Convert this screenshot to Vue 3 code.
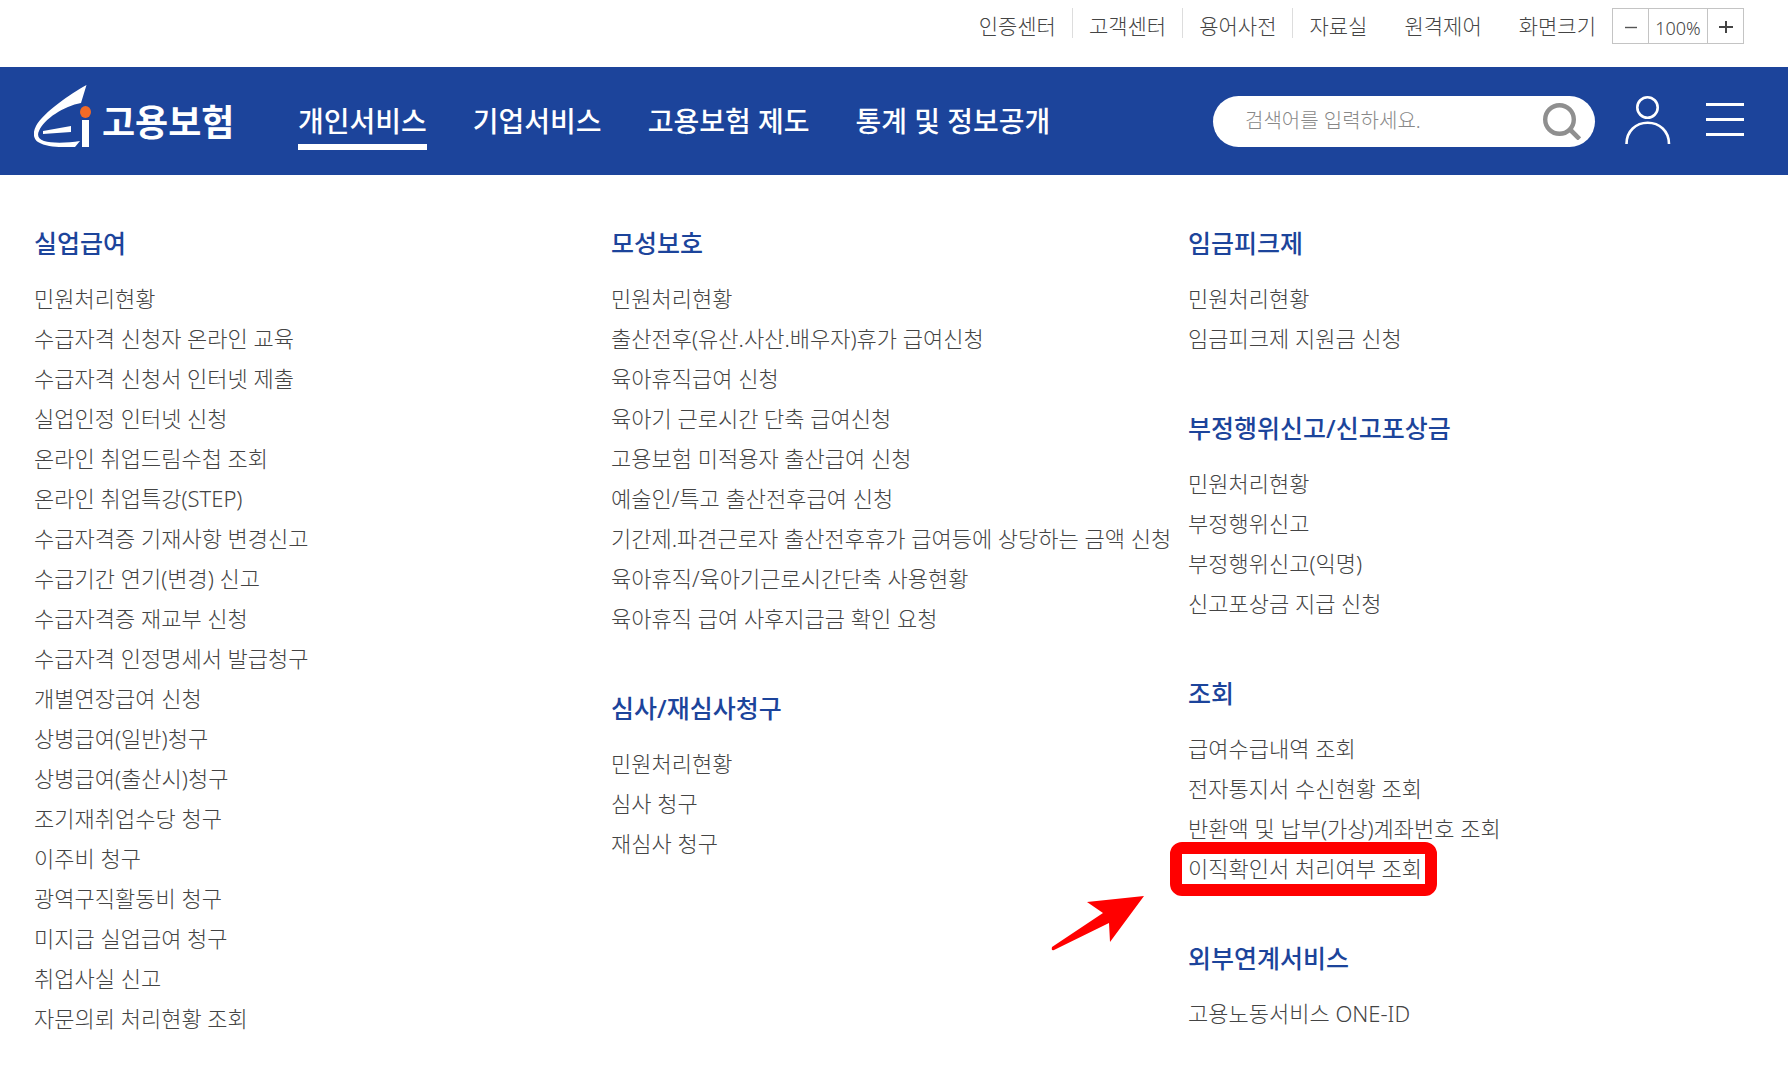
<script setup>
import { ref } from 'vue'

const zoom = ref(100)
const keyword = ref('')

const utilities = [
  { label: '인증센터', divided: true },
  { label: '고객센터', divided: true },
  { label: '용어사전', divided: true },
  { label: '자료실', divided: false },
  { label: '원격제어', divided: false },
]

const menus = ['개인서비스', '기업서비스', '고용보험 제도', '통계 및 정보공개']

const columns = [
  [
    {
      title: '실업급여',
      items: [
        '민원처리현황',
        '수급자격 신청자 온라인 교육',
        '수급자격 신청서 인터넷 제출',
        '실업인정 인터넷 신청',
        '온라인 취업드림수첩 조회',
        '온라인 취업특강(STEP)',
        '수급자격증 기재사항 변경신고',
        '수급기간 연기(변경) 신고',
        '수급자격증 재교부 신청',
        '수급자격 인정명세서 발급청구',
        '개별연장급여 신청',
        '상병급여(일반)청구',
        '상병급여(출산시)청구',
        '조기재취업수당 청구',
        '이주비 청구',
        '광역구직활동비 청구',
        '미지급 실업급여 청구',
        '취업사실 신고',
        '자문의뢰 처리현황 조회',
      ],
    },
  ],
  [
    {
      title: '모성보호',
      items: [
        '민원처리현황',
        '출산전후(유산.사산.배우자)휴가 급여신청',
        '육아휴직급여 신청',
        '육아기 근로시간 단축 급여신청',
        '고용보험 미적용자 출산급여 신청',
        '예술인/특고 출산전후급여 신청',
        '기간제.파견근로자 출산전후휴가 급여등에 상당하는 금액 신청',
        '육아휴직/육아기근로시간단축 사용현황',
        '육아휴직 급여 사후지급금 확인 요청',
      ],
    },
    { title: '심사/재심사청구', items: ['민원처리현황', '심사 청구', '재심사 청구'] },
  ],
  [
    { title: '임금피크제', items: ['민원처리현황', '임금피크제 지원금 신청'] },
    {
      title: '부정행위신고/신고포상금',
      items: ['민원처리현황', '부정행위신고', '부정행위신고(익명)', '신고포상금 지급 신청'],
    },
    {
      title: '조회',
      items: [
        '급여수급내역 조회',
        '전자통지서 수신현황 조회',
        '반환액 및 납부(가상)계좌번호 조회',
        '이직확인서 처리여부 조회',
      ],
    },
    { title: '외부연계서비스', items: ['고용노동서비스 ONE-ID'] },
  ],
]

const highlighted = '이직확인서 처리여부 조회'
</script>

<template>
  <div class="page">
    <div class="utility">
      <ul class="utility-links">
        <li v-for="u in utilities" :key="u.label" :class="{ divided: u.divided }">
          <a href="#">{{ u.label }}</a>
        </li>
      </ul>
      <span class="zoom-label">화면크기</span>
      <div class="zoom" role="group" aria-label="화면크기">
        <button type="button" aria-label="축소" @click="zoom -= 10">
          <svg width="14" height="14" viewBox="0 0 14 14"><path d="M1 8.5h12" stroke="#555" stroke-width="1.4" /></svg>
        </button>
        <output>{{ zoom }}%</output>
        <button type="button" aria-label="확대" @click="zoom += 10">
          <svg width="14" height="14" viewBox="0 0 14 14"><path d="M0 8h14M7 2v12" stroke="#444" stroke-width="2" /></svg>
        </button>
      </div>
    </div>

    <header class="header">
      <a class="logo" href="#">
        <svg width="60" height="62" viewBox="0 0 60 62" aria-hidden="true">
          <path
            fill="#fff"
            d="M52.5 0C36 9 10 27 2 41C-2 49 0 54 4 57C10 61 20 62 28 62H41L46 56C34 58 18 58.5 10 56C4 54 3 50 5 46C10 34 30 21 47 18Z"
          />
          <path fill="#fff" d="M9 46L37 41V47L9 49Z" />
          <rect x="48" y="35" width="7" height="27" fill="#fff" />
          <ellipse cx="51.5" cy="27" rx="5.5" ry="6" fill="#f26a26" />
        </svg>
        <span class="logo-text">고용보험</span>
      </a>
      <nav class="menu">
        <a v-for="(m, i) in menus" :key="m" href="#" :class="{ active: i === 0 }">{{ m }}</a>
      </nav>
      <form class="search" @submit.prevent>
        <input v-model="keyword" type="text" aria-label="검색어" placeholder="검색어를 입력하세요." />
        <button type="submit" aria-label="검색">
          <svg width="38" height="37" viewBox="0 0 38 37" fill="none" stroke="#8f8f8f">
            <circle cx="16.5" cy="16.5" r="14.3" stroke-width="4.4" />
            <path d="M27 26.5L36.5 36" stroke-width="4.6" />
          </svg>
        </button>
      </form>
      <button class="icon user" type="button" aria-label="내 정보">
        <svg width="46" height="48" viewBox="0 0 46 48" fill="none" stroke="#fff" stroke-width="2.6">
          <circle cx="22.5" cy="11.5" r="10.2" />
          <path d="M1.5 48C1.5 35 11 26.8 22.7 26.8S44 35 44 48" />
        </svg>
      </button>
      <button class="icon" type="button" aria-label="전체메뉴">
        <svg width="38" height="33" viewBox="0 0 38 33" fill="none" stroke="#fff" stroke-width="2.8">
          <path d="M0 1.5h38M0 16.5h38M0 31.5h38" />
        </svg>
      </button>
    </header>

    <main class="sitemap">
      <div v-for="(groups, c) in columns" :key="c" class="column">
        <section v-for="g in groups" :key="g.title">
          <h2>{{ g.title }}</h2>
          <ul>
            <li v-for="item in g.items" :key="item">
              <a href="#" :class="{ marked: item === highlighted }">
                {{ item }}
                <svg
                  v-if="item === highlighted"
                  class="arrow"
                  width="94"
                  height="57"
                  viewBox="0 0 94 57"
                  aria-hidden="true"
                >
                  <path fill="#f00" d="M93 1L36 7L52 18L1 52Q0 56 3 55L58 28L59 47Z" />
                </svg>
              </a>
            </li>
          </ul>
        </section>
      </div>
    </main>
  </div>
</template>

<style>
body {
  margin: 0;
  background: #fff;
}
</style>

<style scoped>
.page {
  font-family: 'Noto Sans', 'Noto Sans CJK KR', sans-serif;
  font-weight: 300;
  color: #444;
}

a {
  color: inherit;
  text-decoration: none;
  white-space: nowrap;
}

ul {
  margin: 0;
  padding: 0;
  list-style: none;
}

button {
  display: flex;
  align-items: center;
  justify-content: center;
  padding: 0;
  border: 0;
  background: none;
  cursor: pointer;
}

.utility {
  display: flex;
  justify-content: flex-end;
  align-items: flex-start;
  height: 59px;
  padding: 8px 44px 0 34px;
  font-size: 21px;
  line-height: 36px;
}

.utility-links {
  display: flex;
}

.utility-links li {
  margin-right: 37px;
}

.utility-links .divided {
  display: flex;
  margin-right: 16px;
}

.divided::after {
  content: '';
  width: 1px;
  height: 30px;
  margin-left: 16px;
  background: #ddd;
}

.zoom-label {
  margin-right: 16px;
}

.zoom {
  display: flex;
  box-sizing: border-box;
  height: 36px;
  border: 1px solid #c4c4c4;
}

.zoom button {
  width: 35px;
}

.zoom output {
  width: 58px;
  border: solid #c4c4c4;
  border-width: 0 1px;
  font-size: 18px;
  line-height: 38px;
  text-align: center;
}

.header {
  display: flex;
  align-items: center;
  box-sizing: border-box;
  height: 108px;
  padding: 0 44px 0 34px;
  background: #1c449b;
  color: #fff;
}

.logo {
  display: flex;
  align-items: center;
  flex: none;
  width: 204px;
  margin-bottom: 10px;
}

.logo svg {
  flex: none;
}

.logo-text {
  margin-left: 8px;
  padding-top: 14px;
  font-size: 36px;
  font-weight: 700;
  line-height: 48px;
}

.menu {
  display: flex;
  gap: 46px;
  margin-left: 60px;
  font-size: 28px;
  font-weight: 500;
  line-height: 40px;
}

.menu a {
  padding: 8px 0 3px;
  border-bottom: 6px solid transparent;
}

.menu .active {
  border-color: #fff;
}

.search {
  display: flex;
  align-items: center;
  box-sizing: border-box;
  width: 382px;
  height: 51px;
  margin-left: auto;
  padding: 0 14px 0 32px;
  border-radius: 26px;
  background: #fff;
}

.search input {
  flex: 1;
  min-width: 0;
  padding: 0 0 2px;
  border: 0;
  outline: 0;
  background: none;
  font: inherit;
  font-size: 20px;
  color: #444;
}

.search input::placeholder {
  color: #888;
  opacity: 1;
}

.icon {
  margin-bottom: 3px;
}

.user {
  margin-right: 35px;
  margin-left: 30px;
}

.sitemap {
  display: grid;
  grid-template-columns: repeat(3, 1fr);
  padding: 48px 23px 34px 34px;
  font-size: 22px;
  line-height: 40px;
}

.column {
  display: flex;
  flex-direction: column;
  gap: 50px;
  min-width: 0;
}

h2 {
  margin: 0 0 15px;
  font-size: 25px;
  font-weight: 500;
  line-height: 40px;
  color: #1c449b;
}

li a {
  display: inline-block;
  vertical-align: top;
}

.marked {
  position: relative;
}

.marked::before {
  content: '';
  position: absolute;
  inset: -6px -15px -8px -18px;
  border: 12px solid #f00;
  border-radius: 12px;
}

.arrow {
  position: absolute;
  top: 47px;
  right: calc(100% + 43px);
}
</style>
